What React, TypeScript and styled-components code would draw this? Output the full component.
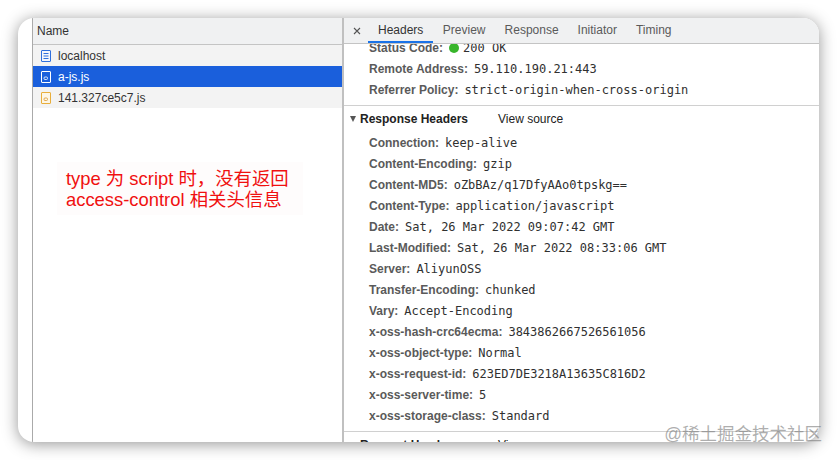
import React from 'react'
import styled, { createGlobalStyle } from 'styled-components'

const GlobalStyle = createGlobalStyle`
  html, body {
    margin: 0;
    background: #fff;
  }
  body {
    font-family: 'Liberation Sans', Arial, 'Noto Sans CJK SC', sans-serif;
    font-size: 12px;
    color: #303942;
  }
`

const requestList = [
  { name: 'localhost', kind: 'doc' },
  { name: 'a-js.js', kind: 'script', selected: true },
  { name: '141.327ce5c7.js', kind: 'script' },
]

const tabList = ['Headers', 'Preview', 'Response', 'Initiator', 'Timing']

const generalHeaders = [
  { label: 'Remote Address:', value: '59.110.190.21:443' },
  { label: 'Referrer Policy:', value: 'strict-origin-when-cross-origin' },
]

const responseHeaders = [
  { label: 'Connection:', value: 'keep-alive' },
  { label: 'Content-Encoding:', value: 'gzip' },
  { label: 'Content-MD5:', value: 'oZbBAz/q17DfyAAo0tpskg==' },
  { label: 'Content-Type:', value: 'application/javascript' },
  { label: 'Date:', value: 'Sat, 26 Mar 2022 09:07:42 GMT' },
  { label: 'Last-Modified:', value: 'Sat, 26 Mar 2022 08:33:06 GMT' },
  { label: 'Server:', value: 'AliyunOSS' },
  { label: 'Transfer-Encoding:', value: 'chunked' },
  { label: 'Vary:', value: 'Accept-Encoding' },
  { label: 'x-oss-hash-crc64ecma:', value: '3843862667526561056' },
  { label: 'x-oss-object-type:', value: 'Normal' },
  { label: 'x-oss-request-id:', value: '623ED7DE3218A13635C816D2' },
  { label: 'x-oss-server-time:', value: '5' },
  { label: 'x-oss-storage-class:', value: 'Standard' },
]

const Page = styled.div`
  position: relative;
  width: 837px;
  height: 460px;
  padding: 18px;
  box-sizing: border-box;
  overflow: hidden;
`

const Window = styled.div`
  height: 424px;
  width: 801px;
  display: flex;
  background: #fff;
  border-radius: 16px;
  overflow: hidden;
  box-shadow: 0 2px 16px rgba(0, 0, 0, 0.42);
`

const Gutter = styled.div`
  width: 14px;
  flex: none;
`

const NamePane = styled.div`
  width: 309px;
  flex: none;
  border-left: 1px solid #aaa;
  border-right: 2px solid #c0c0c0;
`

const NameHeader = styled.div`
  height: 26px;
  line-height: 26px;
  padding-left: 4px;
  background: #f0f1f2;
  border-bottom: 1px solid #c4c4c4;
  color: #333;
`

const Row = styled.div<{ $selected?: boolean }>`
  height: 21px;
  display: flex;
  align-items: center;
  gap: 7px;
  padding-left: 8px;
  background: ${(p) => (p.$selected ? '#1a5fdc' : '#f3f3f3')};
  color: ${(p) => (p.$selected ? '#fff' : '#333')};
`

const DetailPane = styled.div`
  flex: 1;
  min-width: 0;
  display: flex;
  flex-direction: column;
`

const TabBar = styled.div`
  height: 25px;
  flex: none;
  display: flex;
  align-items: stretch;
  background: #f0f1f2;
  border-bottom: 1px solid #c4c4c4;
  position: relative;
  z-index: 1;
`

const CloseButton = styled.div`
  width: 23px;
  padding-left: 1px;
  display: flex;
  align-items: center;
  justify-content: center;
`

const Tab = styled.div<{ $active?: boolean }>`
  display: flex;
  align-items: center;
  padding: 0 ${(p) => (p.$active ? '10px' : '9.5px')} 1px;
  color: ${(p) => (p.$active ? '#333' : '#5a5a5a')};
  box-shadow: ${(p) => (p.$active ? 'inset 0 -2px 0 #1a73e8' : 'none')};
`

const Content = styled.div`
  flex: 1;
  min-height: 0;
  overflow: hidden;
`

const Scroller = styled.div`
  margin-top: -7px;
`

const Section = styled.div`
  padding-bottom: 5px;
  border-bottom: 1px solid #d0d0d0;
`

const HeaderRow = styled.div`
  height: 21px;
  display: flex;
  align-items: center;
  padding-left: 25px;
  white-space: nowrap;
`

const Label = styled.span`
  font-weight: 700;
  color: #5a5a5a;
  margin-right: 6px;
`

const Value = styled.span`
  font-family: 'DejaVu Sans Mono', monospace;
  font-size: 12px;
  color: #303030;
`

const StatusDot = styled.span`
  width: 10px;
  height: 10px;
  border-radius: 50%;
  background: #38b52b;
  margin-right: 4px;
`

const SectionTitle = styled.div`
  height: 23px;
  display: flex;
  align-items: center;
  padding-left: 6px;
  margin: 1px 0 2px;
  white-space: nowrap;
`

const Arrow = styled.span`
  width: 0;
  height: 0;
  border-left: 3.5px solid transparent;
  border-right: 3.5px solid transparent;
  border-top: 6px solid #555;
  margin-right: 4px;
`

const TitleText = styled.span`
  font-weight: 700;
  color: #222;
  width: 138px;
`

const ViewSource = styled.span`
  color: #222;
`

const Annotation = styled.div`
  position: absolute;
  left: 57px;
  top: 162px;
  width: 246px;
  height: 53px;
  padding: 6px 9px;
  box-sizing: border-box;
  background: #fefcfc;
  color: #f01010;
  font-size: 18.4px;
  line-height: 21px;
  white-space: nowrap;
`

const Watermark = styled.div`
  position: absolute;
  right: 15px;
  top: 424px;
  color: rgba(120, 120, 120, 0.6);
  font-family: 'Liberation Sans', 'Noto Sans CJK SC', sans-serif;
  font-size: 17.5px;
  line-height: 20px;
  white-space: nowrap;
`

function FileIcon({ kind, selected }: { kind: string; selected?: boolean }) {
  const color = selected ? '#fff' : kind === 'doc' ? '#2f6fdc' : '#e8ae3c'
  return (
    <svg width="10" height="12" viewBox="0 0 10 12" fill="none">
      <rect x="0.5" y="0.5" width="9" height="11" rx="0.5" stroke={color} fill={selected ? 'none' : kind === 'doc' ? '#f3f6fc' : '#fdf6e6'} />
      {kind === 'doc' ? (
        <path d="M2.5 3.5h5M2.5 6h5M2.5 8.5h5" stroke={color} />
      ) : (
        <rect x="3" y="6" width="3.5" height="2.5" rx="1" stroke={selected ? '#fff' : '#d9952c'} strokeWidth="0.8" />
      )}
    </svg>
  )
}

export default function App() {
  return (
    <Page>
      <GlobalStyle />
      <Window>
        <Gutter />
        <NamePane>
          <NameHeader>Name</NameHeader>
          {requestList.map((item, index) => {
            return (
              <Row key={index} $selected={item.selected}>
                <FileIcon kind={item.kind} selected={item.selected} />
                {item.name}
              </Row>
            )
          })}
        </NamePane>
        <DetailPane>
          <TabBar>
            <CloseButton>
              <svg width="8" height="8" viewBox="0 0 8 8">
                <path d="M1 1l6 6M7 1l-6 6" stroke="#555" strokeWidth="1.1" />
              </svg>
            </CloseButton>
            {tabList.map((tab, index) => {
              return (
                <Tab key={tab} $active={index === 0}>
                  {tab}
                </Tab>
              )
            })}
          </TabBar>
          <Content>
            <Scroller>
              <Section>
                <HeaderRow>
                  <Label>Status Code:</Label>
                  <StatusDot />
                  <Value>200 OK</Value>
                </HeaderRow>
                {generalHeaders.map((item) => {
                  return (
                    <HeaderRow key={item.label}>
                      <Label>{item.label}</Label>
                      <Value>{item.value}</Value>
                    </HeaderRow>
                  )
                })}
              </Section>
              <Section>
                <SectionTitle>
                  <Arrow />
                  <TitleText>Response Headers</TitleText>
                  <ViewSource>View source</ViewSource>
                </SectionTitle>
                {responseHeaders.map((item) => {
                  return (
                    <HeaderRow key={item.label}>
                      <Label>{item.label}</Label>
                      <Value>{item.value}</Value>
                    </HeaderRow>
                  )
                })}
              </Section>
              <SectionTitle>
                <Arrow />
                <TitleText>Request Headers</TitleText>
                <ViewSource>View source</ViewSource>
              </SectionTitle>
            </Scroller>
          </Content>
        </DetailPane>
      </Window>
      <Annotation>
        type 为 script 时，没有返回
        <br />
        access-control 相关头信息
      </Annotation>
      <Watermark>@稀土掘金技术社区</Watermark>
    </Page>
  )
}
